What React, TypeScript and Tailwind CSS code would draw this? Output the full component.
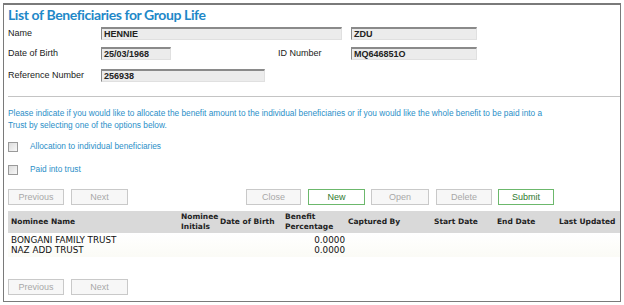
import React from "react";

const sans = { fontFamily: '"Liberation Sans", Arial, sans-serif' };
const verd = { fontFamily: '"DejaVu Sans", Verdana, sans-serif' };

function Field({ w, value }: { w: string; value: string }) {
  return (
    <div
      className={`${w} h-[13px] bg-[#ececec] border-t-2 border-l border-t-[#8a8a8a] border-l-[#8a8a8a] border-r border-b border-r-[#e0e0e0] border-b-[#e0e0e0] flex items-center pl-[2px] text-[9px] font-bold text-[#222] leading-none`}
    >
      {value}
    </div>
  );
}

function Btn({ label, w, green }: { label: string; w: string; green?: boolean }) {
  return (
    <div
      className={`${w} h-[16px] flex items-center justify-center text-[9px] leading-none border ${
        green
          ? "border-[#6cb86c] bg-white text-[#2f7a2f]"
          : "border-[#c9c9c9] bg-[#f7f7f7] text-[#a8a8a8]"
      }`}
    >
      {label}
    </div>
  );
}

function Check({ label }: { label: string }) {
  return (
    <div className="flex items-center h-[11px]">
      <div className="w-[10px] h-[10px] border border-[#9a9a9a] bg-gradient-to-br from-[#dcdcdc] to-[#f8f8f8]" />
      <div className="ml-[12px] text-[8.3px] text-[#2b8fc8] leading-none">{label}</div>
    </div>
  );
}

export default function App() {
  const cols = [
    "w-[170px]",
    "w-[39px]",
    "w-[65px]",
    "w-[63px]",
    "w-[86px]",
    "w-[63px]",
    "w-[62px]",
    "w-[63px]",
  ];
  const heads = [
    "Nominee Name",
    "Nominee Initials",
    "Date of Birth",
    "Benefit Percentage",
    "Captured By",
    "Start Date",
    "End Date",
    "Last Updated",
  ];
  return (
    <div className="w-[624px] h-[305px] bg-white pt-[3px] pl-[3px]" style={sans}>
      <div className="w-[618px] h-[299px] border border-[#7a7a7a] border-t-2 flex flex-col">
        <div
          className="mt-[2px] ml-[4px] h-[16px] text-[14px] leading-[16px] font-bold text-[#1e88c8] tracking-[-0.4px]"
          style={{ fontFamily: '"Lato", "Open Sans", sans-serif' }}
        >
          List of Beneficiaries for Group Life
        </div>

        <div className="mt-[4px] ml-[4px] flex items-center h-[13px]">
          <div className="w-[93px] text-[9px] text-[#222]">Name</div>
          <Field w="w-[241px]" value="HENNIE" />
          <div className="w-[9px]" />
          <Field w="w-[126px]" value="ZDU" />
        </div>
        <div className="mt-[7px] ml-[4px] flex items-center h-[13px]">
          <div className="w-[93px] text-[9px] text-[#222]">Date of Birth</div>
          <Field w="w-[70px]" value="25/03/1968" />
          <div className="w-[107px]" />
          <div className="w-[73px] text-[9px] text-[#222]">ID Number</div>
          <Field w="w-[126px]" value="MQ646851O" />
        </div>
        <div className="mt-[9px] ml-[4px] flex items-center h-[13px]">
          <div className="w-[93px] text-[9px] text-[#222]">Reference Number</div>
          <Field w="w-[164px]" value="256938" />
        </div>

        <div className="mt-[14px] ml-[4px] border-t border-[#c4c4c4]" />

        <div className="mt-[10px] ml-[4px] text-[8.3px] leading-[12px] text-[#2b8fc8]">
          Please indicate if you would like to allocate the benefit amount to the individual beneficiaries or if you would like the whole benefit to be paid into a
          <br />
          Trust by selecting one of the options below.
        </div>

        <div className="mt-[10px] ml-[4px]">
          <Check label="Allocation to individual beneficiaries" />
        </div>
        <div className="mt-[12px] ml-[4px]">
          <Check label="Paid into trust" />
        </div>

        <div className="mt-[14px] ml-[4px] flex items-center">
          <Btn label="Previous" w="w-[56px]" />
          <div className="w-[7px]" />
          <Btn label="Next" w="w-[57px]" />
          <div className="w-[118px]" />
          <Btn label="Close" w="w-[55px]" />
          <div className="w-[7px]" />
          <Btn label="New" w="w-[57px]" green />
          <div className="w-[6px]" />
          <Btn label="Open" w="w-[58px]" />
          <div className="w-[7px]" />
          <Btn label="Delete" w="w-[56px]" />
          <div className="w-[6px]" />
          <Btn label="Submit" w="w-[56px]" green />
        </div>

        <div className="mt-[6px] ml-[4px]" style={verd}>
          <div className="flex h-[22px] bg-[#d9d9d9] text-[7.5px] font-bold text-[#222] leading-[10px]">
            {heads.map((h, i) => (
              <div key={h} className={`${cols[i]} pl-[3px] flex items-center`}>
                {h}
              </div>
            ))}
          </div>
          <div className="pt-[2px] pb-[2px] bg-gradient-to-b from-white to-[#fbfbf6]">
            {[
              ["BONGANI FAMILY TRUST", "0.0000"],
              ["NAZ ADD TRUST", "0.0000"],
            ].map(([n, p]) => (
              <div key={n} className="flex h-[10px] text-[8.8px] leading-[10px] text-[#111]">
                <div className={`${cols[0]} pl-[3px]`}>{n}</div>
                <div className={cols[1]} />
                <div className={cols[2]} />
                <div className={`${cols[3]} text-right`}>{p}</div>
                <div className={cols[4]} />
                <div className={cols[5]} />
                <div className={cols[6]} />
                <div className={cols[7]} />
              </div>
            ))}
          </div>
        </div>

        <div className="mt-[22px] ml-[4px] flex items-center">
          <Btn label="Previous" w="w-[56px]" />
          <div className="w-[7px]" />
          <Btn label="Next" w="w-[57px]" />
        </div>
      </div>
    </div>
  );
}
